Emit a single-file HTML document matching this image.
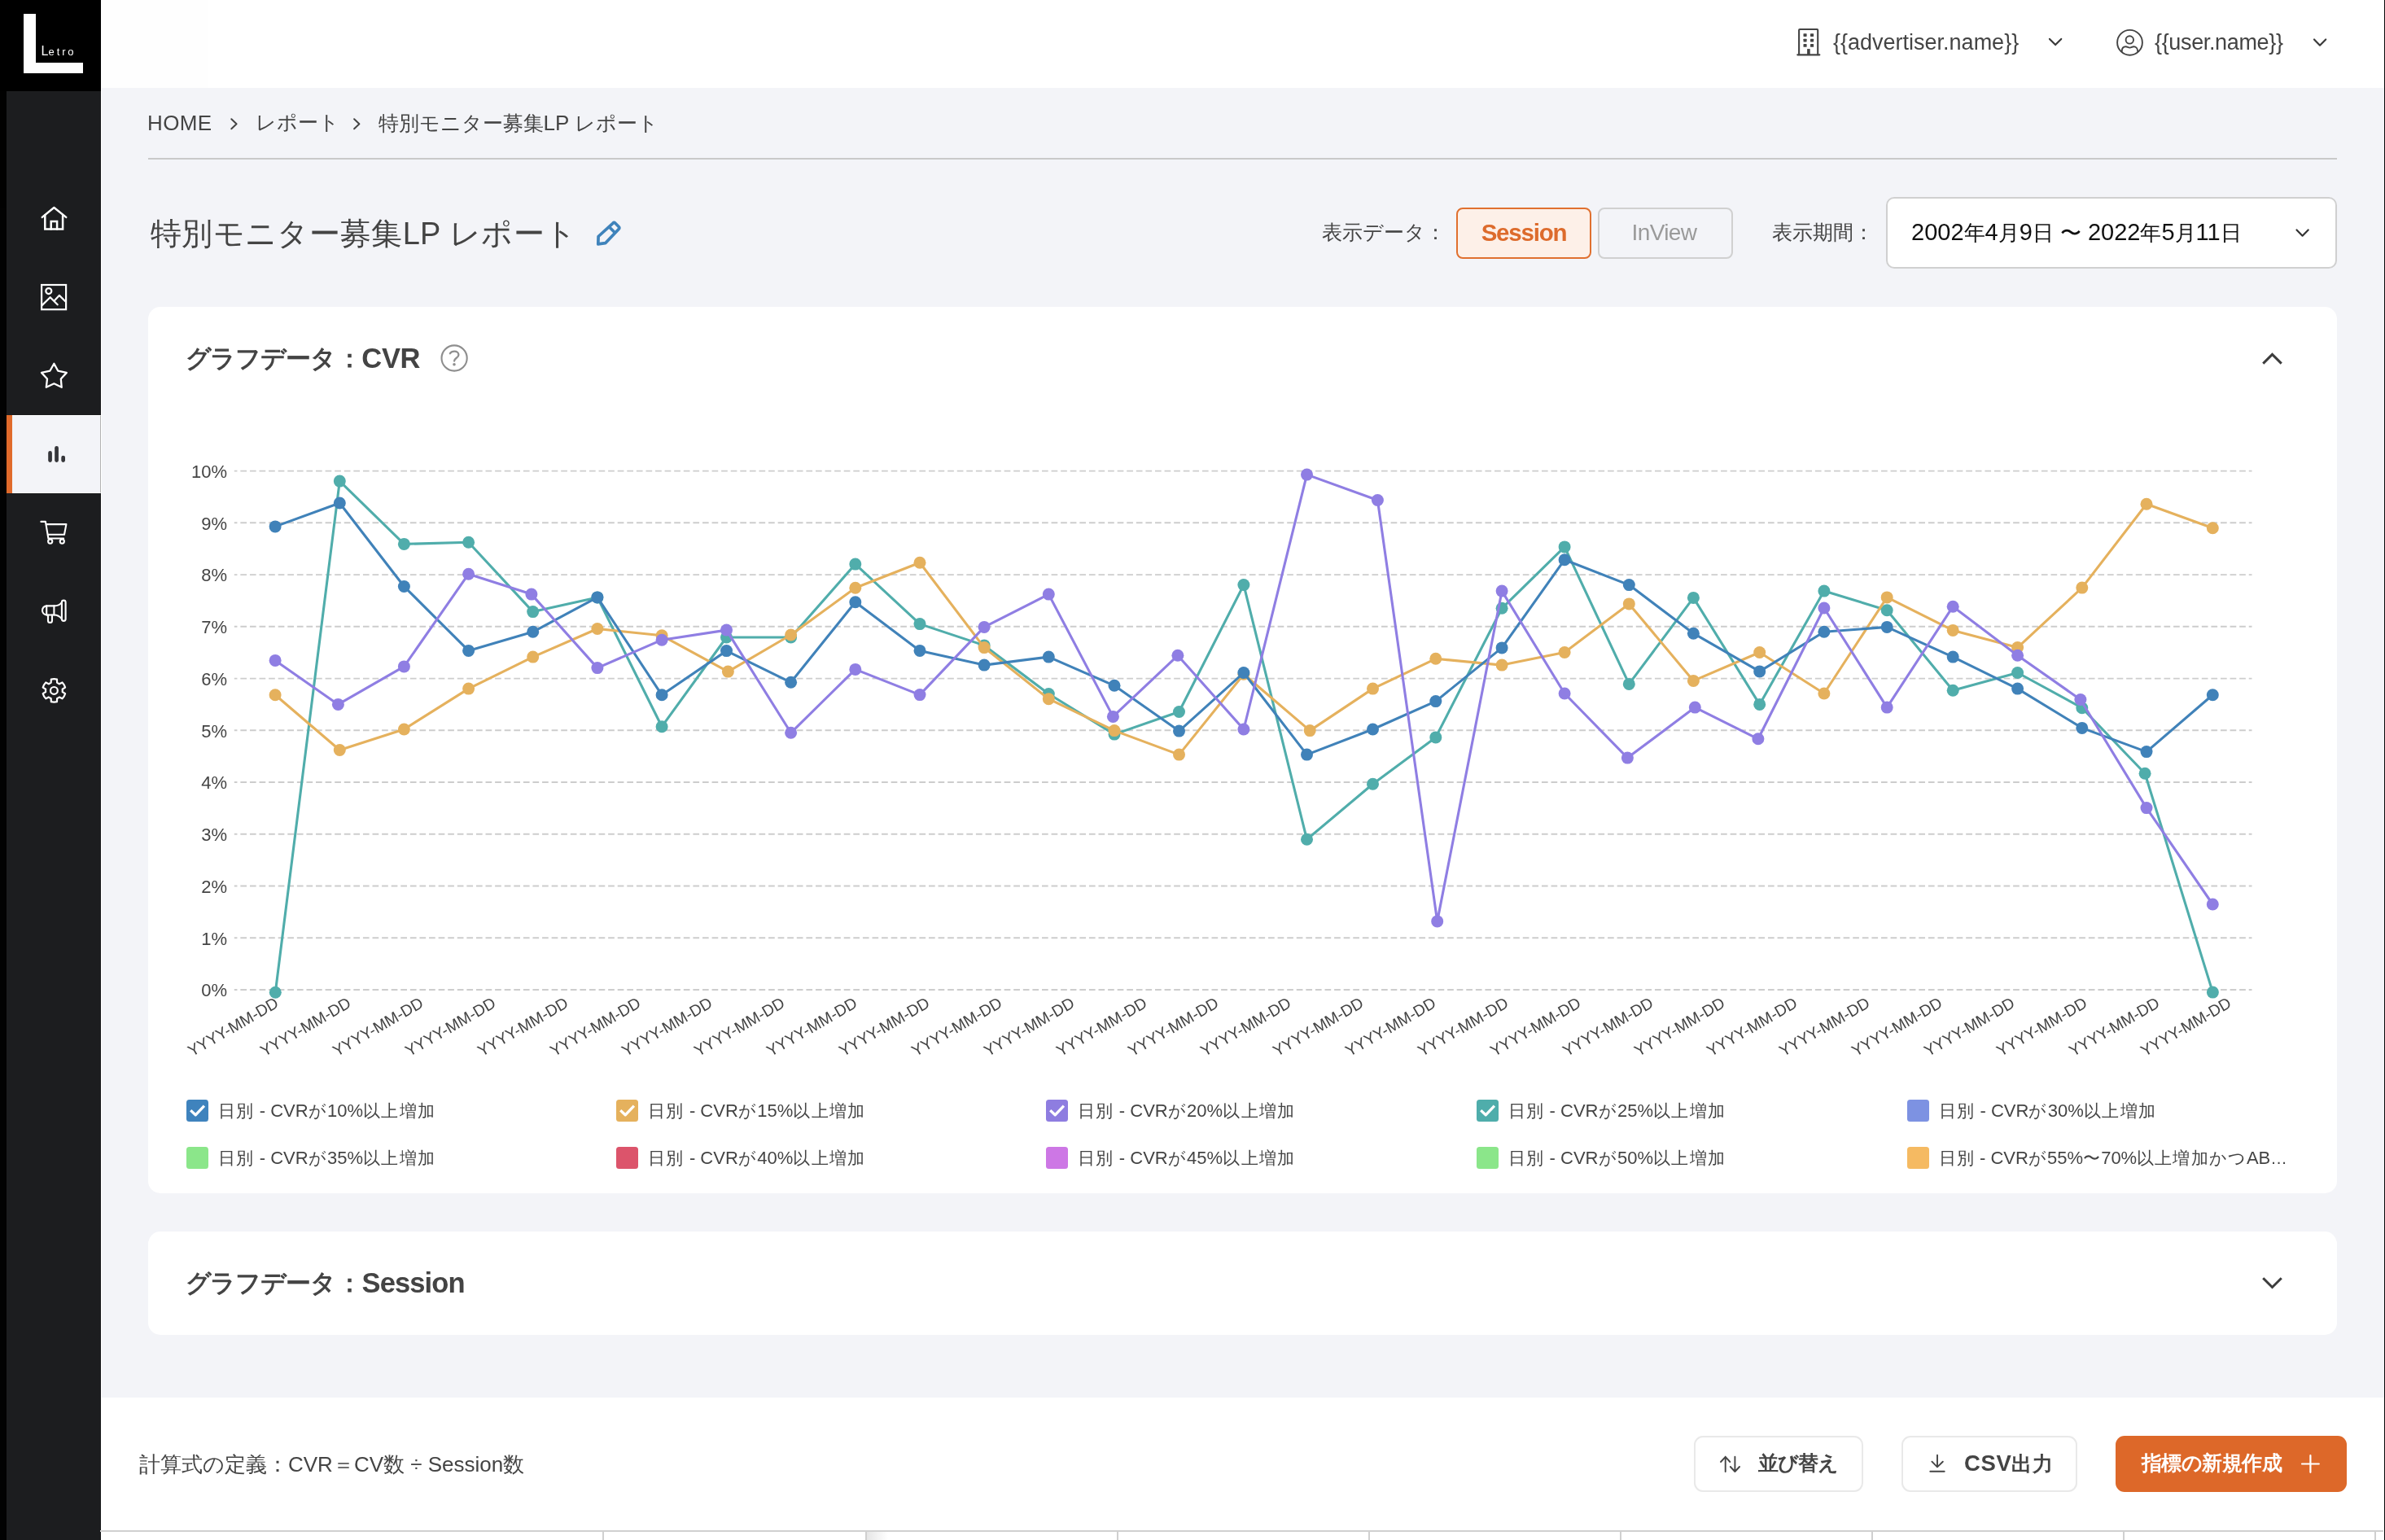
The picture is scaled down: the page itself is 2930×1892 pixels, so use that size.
<!DOCTYPE html>
<html lang="ja">
<head>
<meta charset="utf-8">
<title>Letro Report</title>
<style>
*{box-sizing:border-box;margin:0;padding:0}
html,body{width:2930px;height:1892px;overflow:hidden}
body{position:relative;background:#f3f4f8;font-family:"Liberation Sans",sans-serif;color:#444;font-size:26px}
.abs{position:absolute}
.t{position:absolute;white-space:nowrap;line-height:1}
#strip{left:0;top:0;width:8px;height:1892px;background:rgba(0,0,0,.998)}
#side{left:8px;top:0;width:115.5px;height:1892px;background:rgba(27,28,30,.998)}
#logo{left:0;top:0;width:123.5px;height:111.5px;background:rgba(0,0,0,.998)}
#hdr{left:123px;top:0;width:2807px;height:108px;background:rgba(255,255,255,.998)}
#active{left:8px;top:509.8px;width:116px;height:96.3px;background:#f3f4f8;border-right:1px solid #b2b2b2;border-top:1.3px solid #fff;border-bottom:1.3px solid #fff}
#redge{left:2928.5px;top:0;width:1.5px;height:1892px;background:#0a0a0a}
.card{position:absolute;left:181.6px;width:2689.4px;background:#fff;border-radius:15px}
#bottom{left:123.5px;top:1716.8px;width:2805px;height:176px;background:rgba(255,255,255,.998)}
.btn{position:absolute;top:1764px;height:69px;border:2px solid #e9e9e9;border-radius:11px;background:#fff}
.lg{position:absolute;width:26.8px;height:26.8px;border-radius:3.5px}
.lt{position:absolute;white-space:nowrap;line-height:1;font-size:20.6px;letter-spacing:1.4px;color:#444}
.lt b{font-weight:normal;font-size:22px;letter-spacing:0}
.xl{position:absolute;white-space:nowrap;line-height:1;font-size:19.6px;color:#444;transform-origin:100% 50%;transform:rotate(-30deg)}
.dt b{font-weight:normal;font-size:29px}
.yl{position:absolute;white-space:nowrap;line-height:1;font-size:22px;color:#444;text-align:right;width:80px;left:199px}
</style>
</head>
<body>
<div id="wrap" style="position:absolute;left:0;top:0;width:2930px;height:1892px;will-change:opacity;opacity:0.999">
<div id="hdr" class="abs"></div>
<div class="abs" style="left:124px;top:108px;width:1px;height:1784px;background:#fff"></div>
<div id="strip" class="abs"></div>
<div id="side" class="abs"></div>
<div id="logo" class="abs">
  <svg class="abs" style="left:0;top:0" width="123" height="111" viewBox="0 0 123 111">
    <path d="M29 17h15v60h58v13H29z" fill="#fff"/>
    <text y="68" font-family="Liberation Sans, sans-serif" fill="#fff"><tspan x="50.4" font-size="16">L</tspan><tspan x="59.5" font-size="13" letter-spacing="2.9">etro</tspan></text>
  </svg>
</div>
<div id="active" class="abs"></div>
<div class="abs" style="left:8px;top:509.8px;width:7.2px;height:96.3px;background:#e06a2b"></div>
<div id="redge" class="abs"></div>

<!-- header right -->
<div class="t" style="left:2252px;top:38.5px;font-size:27px">{{advertiser.name}}</div>
<div class="t" style="left:2647px;top:38.5px;font-size:27px;letter-spacing:-0.35px">{{user.name}}</div>

<!-- breadcrumb -->
<div class="t" style="left:181px;top:137.8px;letter-spacing:0.4px">HOME</div>
<div class="t" style="left:313.7px;top:138px;font-size:25px">レポート</div>
<div class="t" style="left:464.5px;top:138px;font-size:25px">特別モニター募集<span style="font-size:26px">LP </span>レポート</div>
<div class="abs" style="left:182px;top:194px;width:2689px;height:2px;background:#c9c9c9"></div>

<!-- title row -->
<div class="t" style="left:185px;top:268px;font-size:38px;letter-spacing:0.33px">特別モニター募集LP レポート</div>
<div class="t" style="left:1624px;top:273px;font-size:25px">表示データ：</div>
<div class="abs" style="left:1789px;top:255px;width:166px;height:63px;border:2px solid #e0702f;border-radius:8px;background:#fdf0e8"></div>
<div class="t" style="left:1789px;top:271px;width:166px;text-align:center;font-size:29.5px;letter-spacing:-1.2px;font-weight:bold;color:#dd6b2c">Session</div>
<div class="abs" style="left:1963px;top:255px;width:166px;height:63px;border:2px solid #d0d0d0;border-radius:8px;background:#f3f4f8"></div>
<div class="t" style="left:1963px;top:272px;width:163px;text-align:center;font-size:28px;letter-spacing:-0.6px;color:#9a9a9a">InView</div>
<div class="t" style="left:2176.5px;top:273px;font-size:25px">表示期間：</div>
<div class="abs" style="left:2317px;top:242px;width:554px;height:88px;border:2px solid #d0d0d0;border-radius:10px;background:#fff"></div>
<div class="t dt" style="left:2348px;top:271px;font-size:26px;color:#111"><b>2002</b>年<b>4</b>月<b>9</b>日<b> </b>〜<b> </b><b>2022</b>年<b>5</b>月<b>11</b>日</div>

<!-- card 1 -->
<div class="card" style="top:376.8px;height:1089.5px"></div>
<div class="t" style="left:227.6px;top:425px;font-size:31px;font-weight:bold;letter-spacing:-1.1px">グラフデータ</div><div class="t" style="left:413.5px;top:425px;font-size:31px;font-weight:bold">：</div><div class="t" style="left:444.3px;top:422.5px;font-size:34.5px;font-weight:bold;letter-spacing:-0.3px">CVR</div>
<svg class="abs" style="left:0;top:0" width="2930" height="1892" viewBox="0 0 2930 1892">
<line x1="287.8" x2="2766.5" y1="578.6" y2="578.6" stroke="#cdcdcd" stroke-width="1.9" stroke-dasharray="7.7 3.884" stroke-dashoffset="4.034"/>
<line x1="287.8" x2="2766.5" y1="642.3" y2="642.3" stroke="#cdcdcd" stroke-width="1.9" stroke-dasharray="7.7 3.884" stroke-dashoffset="4.034"/>
<line x1="287.8" x2="2766.5" y1="706.1" y2="706.1" stroke="#cdcdcd" stroke-width="1.9" stroke-dasharray="7.7 3.884" stroke-dashoffset="4.034"/>
<line x1="287.8" x2="2766.5" y1="769.8" y2="769.8" stroke="#cdcdcd" stroke-width="1.9" stroke-dasharray="7.7 3.884" stroke-dashoffset="4.034"/>
<line x1="287.8" x2="2766.5" y1="833.6" y2="833.6" stroke="#cdcdcd" stroke-width="1.9" stroke-dasharray="7.7 3.884" stroke-dashoffset="4.034"/>
<line x1="287.8" x2="2766.5" y1="897.3" y2="897.3" stroke="#cdcdcd" stroke-width="1.9" stroke-dasharray="7.7 3.884" stroke-dashoffset="4.034"/>
<line x1="287.8" x2="2766.5" y1="961.0" y2="961.0" stroke="#cdcdcd" stroke-width="1.9" stroke-dasharray="7.7 3.884" stroke-dashoffset="4.034"/>
<line x1="287.8" x2="2766.5" y1="1024.8" y2="1024.8" stroke="#cdcdcd" stroke-width="1.9" stroke-dasharray="7.7 3.884" stroke-dashoffset="4.034"/>
<line x1="287.8" x2="2766.5" y1="1088.5" y2="1088.5" stroke="#cdcdcd" stroke-width="1.9" stroke-dasharray="7.7 3.884" stroke-dashoffset="4.034"/>
<line x1="287.8" x2="2766.5" y1="1152.3" y2="1152.3" stroke="#cdcdcd" stroke-width="1.9" stroke-dasharray="7.7 3.884" stroke-dashoffset="4.034"/>
<line x1="287.8" x2="2766.5" y1="1216.0" y2="1216.0" stroke="#cdcdcd" stroke-width="1.9" stroke-dasharray="7.7 3.884" stroke-dashoffset="4.034"/>
<polyline points="338.3,1219.2 417.3,591.1 496.4,668.4 575.6,666.3 654.7,751.6 733.9,733.9 813.1,892.7 892.5,783.0 971.6,783.0 1050.8,693.1 1130.0,766.6 1209.1,792.9 1288.3,852.5 1369.0,902.1 1448.5,874.5 1527.9,718.6 1605.5,1031.3 1686.5,963.3 1763.8,905.9 1845.1,747.3 1922.1,671.9 2001.3,840.4 2080.4,734.4 2161.7,865.4 2240.9,726.1 2318.2,749.7 2399.2,848.2 2478.6,826.5 2557.8,869.7 2635.1,950.2 2718.4,1219.1" fill="none" stroke="#50adab" stroke-width="3.1" stroke-linejoin="round"/>
<g fill="#50adab"><circle cx="338.3" cy="1219.2" r="7.5"/><circle cx="417.3" cy="591.1" r="7.5"/><circle cx="496.4" cy="668.4" r="7.5"/><circle cx="575.6" cy="666.3" r="7.5"/><circle cx="654.7" cy="751.6" r="7.5"/><circle cx="733.9" cy="733.9" r="7.5"/><circle cx="813.1" cy="892.7" r="7.5"/><circle cx="892.5" cy="783.0" r="7.5"/><circle cx="971.6" cy="783.0" r="7.5"/><circle cx="1050.8" cy="693.1" r="7.5"/><circle cx="1130.0" cy="766.6" r="7.5"/><circle cx="1209.1" cy="792.9" r="7.5"/><circle cx="1288.3" cy="852.5" r="7.5"/><circle cx="1369.0" cy="902.1" r="7.5"/><circle cx="1448.5" cy="874.5" r="7.5"/><circle cx="1527.9" cy="718.6" r="7.5"/><circle cx="1605.5" cy="1031.3" r="7.5"/><circle cx="1686.5" cy="963.3" r="7.5"/><circle cx="1763.8" cy="905.9" r="7.5"/><circle cx="1845.1" cy="747.3" r="7.5"/><circle cx="1922.1" cy="671.9" r="7.5"/><circle cx="2001.3" cy="840.4" r="7.5"/><circle cx="2080.4" cy="734.4" r="7.5"/><circle cx="2161.7" cy="865.4" r="7.5"/><circle cx="2240.9" cy="726.1" r="7.5"/><circle cx="2318.2" cy="749.7" r="7.5"/><circle cx="2399.2" cy="848.2" r="7.5"/><circle cx="2478.6" cy="826.5" r="7.5"/><circle cx="2557.8" cy="869.7" r="7.5"/><circle cx="2635.1" cy="950.2" r="7.5"/><circle cx="2718.4" cy="1219.1" r="7.5"/></g>
<polyline points="338.1,853.8 417.3,921.5 496.4,896.0 575.6,846.1 654.7,807.1 733.9,772.5 813.1,780.8 894.4,825.1 971.6,780.0 1050.8,722.3 1130.0,691.2 1209.1,795.6 1288.3,858.7 1369.0,897.6 1448.5,927.1 1527.9,828.3 1609.2,897.6 1686.5,846.1 1763.8,809.3 1845.1,817.1 1922.1,801.5 2001.3,741.9 2080.4,836.4 2161.7,801.5 2240.9,852.0 2318.2,733.9 2399.2,774.4 2478.6,795.6 2557.8,722.1 2637.0,619.3 2718.3,648.8" fill="none" stroke="#e5b15d" stroke-width="3.1" stroke-linejoin="round"/>
<g fill="#e5b15d"><circle cx="338.1" cy="853.8" r="7.5"/><circle cx="417.3" cy="921.5" r="7.5"/><circle cx="496.4" cy="896.0" r="7.5"/><circle cx="575.6" cy="846.1" r="7.5"/><circle cx="654.7" cy="807.1" r="7.5"/><circle cx="733.9" cy="772.5" r="7.5"/><circle cx="813.1" cy="780.8" r="7.5"/><circle cx="894.4" cy="825.1" r="7.5"/><circle cx="971.6" cy="780.0" r="7.5"/><circle cx="1050.8" cy="722.3" r="7.5"/><circle cx="1130.0" cy="691.2" r="7.5"/><circle cx="1209.1" cy="795.6" r="7.5"/><circle cx="1288.3" cy="858.7" r="7.5"/><circle cx="1369.0" cy="897.6" r="7.5"/><circle cx="1448.5" cy="927.1" r="7.5"/><circle cx="1527.9" cy="828.3" r="7.5"/><circle cx="1609.2" cy="897.6" r="7.5"/><circle cx="1686.5" cy="846.1" r="7.5"/><circle cx="1763.8" cy="809.3" r="7.5"/><circle cx="1845.1" cy="817.1" r="7.5"/><circle cx="1922.1" cy="801.5" r="7.5"/><circle cx="2001.3" cy="741.9" r="7.5"/><circle cx="2080.4" cy="836.4" r="7.5"/><circle cx="2161.7" cy="801.5" r="7.5"/><circle cx="2240.9" cy="852.0" r="7.5"/><circle cx="2318.2" cy="733.9" r="7.5"/><circle cx="2399.2" cy="774.4" r="7.5"/><circle cx="2478.6" cy="795.6" r="7.5"/><circle cx="2557.8" cy="722.1" r="7.5"/><circle cx="2637.0" cy="619.3" r="7.5"/><circle cx="2718.3" cy="648.8" r="7.5"/></g>
<polyline points="338.1,646.9 417.3,618.0 496.4,720.5 575.6,799.4 654.7,776.3 733.9,733.9 813.1,853.8 892.5,799.6 971.6,838.3 1050.8,739.8 1130.0,799.4 1209.1,817.1 1288.3,807.1 1369.0,842.3 1448.5,898.1 1527.9,826.5 1605.5,927.1 1686.5,896.0 1763.8,861.6 1845.1,795.9 1922.1,687.7 2001.3,718.6 2080.4,778.2 2161.7,824.9 2240.9,776.3 2318.2,770.4 2399.2,807.1 2478.6,846.1 2557.8,894.4 2637.0,923.6 2718.3,853.8" fill="none" stroke="#4082b9" stroke-width="3.1" stroke-linejoin="round"/>
<g fill="#4082b9"><circle cx="338.1" cy="646.9" r="7.5"/><circle cx="417.3" cy="618.0" r="7.5"/><circle cx="496.4" cy="720.5" r="7.5"/><circle cx="575.6" cy="799.4" r="7.5"/><circle cx="654.7" cy="776.3" r="7.5"/><circle cx="733.9" cy="733.9" r="7.5"/><circle cx="813.1" cy="853.8" r="7.5"/><circle cx="892.5" cy="799.6" r="7.5"/><circle cx="971.6" cy="838.3" r="7.5"/><circle cx="1050.8" cy="739.8" r="7.5"/><circle cx="1130.0" cy="799.4" r="7.5"/><circle cx="1209.1" cy="817.1" r="7.5"/><circle cx="1288.3" cy="807.1" r="7.5"/><circle cx="1369.0" cy="842.3" r="7.5"/><circle cx="1448.5" cy="898.1" r="7.5"/><circle cx="1527.9" cy="826.5" r="7.5"/><circle cx="1605.5" cy="927.1" r="7.5"/><circle cx="1686.5" cy="896.0" r="7.5"/><circle cx="1763.8" cy="861.6" r="7.5"/><circle cx="1845.1" cy="795.9" r="7.5"/><circle cx="1922.1" cy="687.7" r="7.5"/><circle cx="2001.3" cy="718.6" r="7.5"/><circle cx="2080.4" cy="778.2" r="7.5"/><circle cx="2161.7" cy="824.9" r="7.5"/><circle cx="2240.9" cy="776.3" r="7.5"/><circle cx="2318.2" cy="770.4" r="7.5"/><circle cx="2399.2" cy="807.1" r="7.5"/><circle cx="2478.6" cy="846.1" r="7.5"/><circle cx="2557.8" cy="894.4" r="7.5"/><circle cx="2637.0" cy="923.6" r="7.5"/><circle cx="2718.3" cy="853.8" r="7.5"/></g>
<polyline points="338.1,811.4 415.4,865.4 496.4,818.9 575.6,705.2 652.9,730.1 733.9,820.6 813.1,786.2 892.5,774.1 971.6,900.3 1050.8,822.4 1130.0,853.6 1209.1,770.4 1288.3,730.1 1367.4,880.4 1446.9,805.3 1527.9,896.0 1605.5,583.1 1692.4,614.5 1765.7,1131.9 1845.1,726.1 1922.1,852.0 1999.4,931.1 2082.3,869.1 2159.9,907.8 2240.9,747.0 2318.2,869.1 2399.2,745.2 2478.6,805.3 2555.9,859.5 2637.0,992.6 2718.3,1111.0" fill="none" stroke="#8f7ee3" stroke-width="3.1" stroke-linejoin="round"/>
<g fill="#8f7ee3"><circle cx="338.1" cy="811.4" r="7.5"/><circle cx="415.4" cy="865.4" r="7.5"/><circle cx="496.4" cy="818.9" r="7.5"/><circle cx="575.6" cy="705.2" r="7.5"/><circle cx="652.9" cy="730.1" r="7.5"/><circle cx="733.9" cy="820.6" r="7.5"/><circle cx="813.1" cy="786.2" r="7.5"/><circle cx="892.5" cy="774.1" r="7.5"/><circle cx="971.6" cy="900.3" r="7.5"/><circle cx="1050.8" cy="822.4" r="7.5"/><circle cx="1130.0" cy="853.6" r="7.5"/><circle cx="1209.1" cy="770.4" r="7.5"/><circle cx="1288.3" cy="730.1" r="7.5"/><circle cx="1367.4" cy="880.4" r="7.5"/><circle cx="1446.9" cy="805.3" r="7.5"/><circle cx="1527.9" cy="896.0" r="7.5"/><circle cx="1605.5" cy="583.1" r="7.5"/><circle cx="1692.4" cy="614.5" r="7.5"/><circle cx="1765.7" cy="1131.9" r="7.5"/><circle cx="1845.1" cy="726.1" r="7.5"/><circle cx="1922.1" cy="852.0" r="7.5"/><circle cx="1999.4" cy="931.1" r="7.5"/><circle cx="2082.3" cy="869.1" r="7.5"/><circle cx="2159.9" cy="907.8" r="7.5"/><circle cx="2240.9" cy="747.0" r="7.5"/><circle cx="2318.2" cy="869.1" r="7.5"/><circle cx="2399.2" cy="745.2" r="7.5"/><circle cx="2478.6" cy="805.3" r="7.5"/><circle cx="2555.9" cy="859.5" r="7.5"/><circle cx="2637.0" cy="992.6" r="7.5"/><circle cx="2718.3" cy="1111.0" r="7.5"/></g>

</svg>
<div class="yl" style="top:568.9px">10%</div>
<div class="yl" style="top:632.6px">9%</div>
<div class="yl" style="top:696.4px">8%</div>
<div class="yl" style="top:760.1px">7%</div>
<div class="yl" style="top:823.9px">6%</div>
<div class="yl" style="top:887.6px">5%</div>
<div class="yl" style="top:951.3px">4%</div>
<div class="yl" style="top:1015.1px">3%</div>
<div class="yl" style="top:1078.8px">2%</div>
<div class="yl" style="top:1142.6px">1%</div>
<div class="yl" style="top:1206.3px">0%</div>
<div class="xl" style="right:2589.3px;top:1221px">YYYY-MM-DD</div>
<div class="xl" style="right:2500.4px;top:1221px">YYYY-MM-DD</div>
<div class="xl" style="right:2411.6px;top:1221px">YYYY-MM-DD</div>
<div class="xl" style="right:2322.7px;top:1221px">YYYY-MM-DD</div>
<div class="xl" style="right:2233.9px;top:1221px">YYYY-MM-DD</div>
<div class="xl" style="right:2145.0px;top:1221px">YYYY-MM-DD</div>
<div class="xl" style="right:2056.1px;top:1221px">YYYY-MM-DD</div>
<div class="xl" style="right:1967.3px;top:1221px">YYYY-MM-DD</div>
<div class="xl" style="right:1878.4px;top:1221px">YYYY-MM-DD</div>
<div class="xl" style="right:1789.6px;top:1221px">YYYY-MM-DD</div>
<div class="xl" style="right:1700.7px;top:1221px">YYYY-MM-DD</div>
<div class="xl" style="right:1611.8px;top:1221px">YYYY-MM-DD</div>
<div class="xl" style="right:1523.0px;top:1221px">YYYY-MM-DD</div>
<div class="xl" style="right:1434.1px;top:1221px">YYYY-MM-DD</div>
<div class="xl" style="right:1345.3px;top:1221px">YYYY-MM-DD</div>
<div class="xl" style="right:1256.4px;top:1221px">YYYY-MM-DD</div>
<div class="xl" style="right:1167.5px;top:1221px">YYYY-MM-DD</div>
<div class="xl" style="right:1078.7px;top:1221px">YYYY-MM-DD</div>
<div class="xl" style="right:989.8px;top:1221px">YYYY-MM-DD</div>
<div class="xl" style="right:901.0px;top:1221px">YYYY-MM-DD</div>
<div class="xl" style="right:812.1px;top:1221px">YYYY-MM-DD</div>
<div class="xl" style="right:723.2px;top:1221px">YYYY-MM-DD</div>
<div class="xl" style="right:634.4px;top:1221px">YYYY-MM-DD</div>
<div class="xl" style="right:545.5px;top:1221px">YYYY-MM-DD</div>
<div class="xl" style="right:456.7px;top:1221px">YYYY-MM-DD</div>
<div class="xl" style="right:367.8px;top:1221px">YYYY-MM-DD</div>
<div class="xl" style="right:278.9px;top:1221px">YYYY-MM-DD</div>
<div class="xl" style="right:190.1px;top:1221px">YYYY-MM-DD</div>
<div class="lg" style="left:229.0px;top:1350.9px;background:#3f83bd"></div>
<svg class="abs" style="left:229.0px;top:1350.9px" width="27" height="27" viewBox="0 0 27 27"><path d="M5.2 13.1L11.2 18.8L21.9 7.6" fill="none" stroke="#fff" stroke-width="3.3" stroke-linecap="butt" stroke-linejoin="round"/></svg>
<div class="lt" style="left:267.8px;top:1353.9px">日別<b> - CVR</b>が<b>10%</b>以上増加</div>
<div class="lg" style="left:757.2px;top:1350.9px;background:#e5b15d"></div>
<svg class="abs" style="left:757.2px;top:1350.9px" width="27" height="27" viewBox="0 0 27 27"><path d="M5.2 13.1L11.2 18.8L21.9 7.6" fill="none" stroke="#fff" stroke-width="3.3" stroke-linecap="butt" stroke-linejoin="round"/></svg>
<div class="lt" style="left:796.0px;top:1353.9px">日別<b> - CVR</b>が<b>15%</b>以上増加</div>
<div class="lg" style="left:1285.1px;top:1350.9px;background:#8e7de0"></div>
<svg class="abs" style="left:1285.1px;top:1350.9px" width="27" height="27" viewBox="0 0 27 27"><path d="M5.2 13.1L11.2 18.8L21.9 7.6" fill="none" stroke="#fff" stroke-width="3.3" stroke-linecap="butt" stroke-linejoin="round"/></svg>
<div class="lt" style="left:1323.9px;top:1353.9px">日別<b> - CVR</b>が<b>20%</b>以上増加</div>
<div class="lg" style="left:1813.9px;top:1350.9px;background:#4fadab"></div>
<svg class="abs" style="left:1813.9px;top:1350.9px" width="27" height="27" viewBox="0 0 27 27"><path d="M5.2 13.1L11.2 18.8L21.9 7.6" fill="none" stroke="#fff" stroke-width="3.3" stroke-linecap="butt" stroke-linejoin="round"/></svg>
<div class="lt" style="left:1852.7px;top:1353.9px">日別<b> - CVR</b>が<b>25%</b>以上増加</div>
<div class="lg" style="left:2342.8px;top:1350.9px;background:#7d92e2"></div>
<div class="lt" style="left:2381.6px;top:1353.9px">日別<b> - CVR</b>が<b>30%</b>以上増加</div>
<div class="lg" style="left:229.0px;top:1409.0px;background:#8be68a"></div>
<div class="lt" style="left:267.8px;top:1412.0px">日別<b> - CVR</b>が<b>35%</b>以上増加</div>
<div class="lg" style="left:757.2px;top:1409.0px;background:#dc546b"></div>
<div class="lt" style="left:796.0px;top:1412.0px">日別<b> - CVR</b>が<b>40%</b>以上増加</div>
<div class="lg" style="left:1285.1px;top:1409.0px;background:#cd77e5"></div>
<div class="lt" style="left:1323.9px;top:1412.0px">日別<b> - CVR</b>が<b>45%</b>以上増加</div>
<div class="lg" style="left:1813.9px;top:1409.0px;background:#8be68a"></div>
<div class="lt" style="left:1852.7px;top:1412.0px">日別<b> - CVR</b>が<b>50%</b>以上増加</div>
<div class="lg" style="left:2342.8px;top:1409.0px;background:#f5ba62"></div>
<div class="lt" style="left:2381.6px;top:1412.0px;letter-spacing:1.12px">日別<b> - CVR</b>が<b>55%</b>〜<b>70%</b>以上増加かつ<b>AB</b>…</div>

<!-- card 2 -->
<div class="card" style="top:1512.7px;height:127.6px"></div>
<div class="t" style="left:227.6px;top:1561px;font-size:31px;font-weight:bold;letter-spacing:-1.1px">グラフデータ</div><div class="t" style="left:413.5px;top:1561px;font-size:31px;font-weight:bold">：</div><div class="t" style="left:444.6px;top:1558.5px;font-size:34.5px;letter-spacing:-0.9px;font-weight:bold">Session</div>

<!-- bottom -->
<div id="bottom" class="abs"></div>
<div class="t" style="left:171px;top:1786px;font-size:26px">計算式の定義：CVR＝CV数 ÷ Session数</div>
<div class="btn" style="left:2081px;width:208px"></div>
<div class="t" style="left:2159.5px;top:1786px;font-size:24.5px;letter-spacing:-1px;font-weight:bold">並び替え</div>
<div class="btn" style="left:2336px;width:216px"></div>
<div class="t" style="left:2413px;top:1784px;font-size:27.5px;letter-spacing:0.6px;font-weight:bold">CSV<span style="font-size:25px">出力</span></div>
<div class="btn" style="left:2599px;width:284px;border:none;background:#dd6829"></div>
<div class="t" style="left:2630.5px;top:1786px;font-size:24.6px;letter-spacing:-0.45px;font-weight:bold;color:#fff">指標の新規作成</div>
<!-- table top -->
<div class="abs" style="left:123px;top:1880px;width:2805px;height:2px;background:#d0d0d0"></div>
<div class="abs" style="left:740px;top:1880px;width:2px;height:12px;background:#d0d0d0"></div>
<div class="abs" style="left:1063px;top:1880px;width:2px;height:12px;background:#d0d0d0"></div>
<div class="abs" style="left:1372px;top:1880px;width:2px;height:12px;background:#d0d0d0"></div>
<div class="abs" style="left:1681px;top:1880px;width:2px;height:12px;background:#d0d0d0"></div>
<div class="abs" style="left:1990px;top:1880px;width:2px;height:12px;background:#d0d0d0"></div>
<div class="abs" style="left:2299px;top:1880px;width:2px;height:12px;background:#d0d0d0"></div>
<div class="abs" style="left:2608px;top:1880px;width:2px;height:12px;background:#d0d0d0"></div>
<div class="abs" style="left:2917px;top:1880px;width:2px;height:12px;background:#d0d0d0"></div>
<div class="abs" style="left:1065px;top:1882px;width:26px;height:10px;background:linear-gradient(90deg,#e6e6e6,#fff)"></div>
<svg class="abs" style="left:0;top:0" width="2930" height="1892" viewBox="0 0 2930 1892" fill="none" stroke-linecap="round" stroke-linejoin="round">
<g stroke="#fff" stroke-width="2.5"><path d="M51.8 266.9L66.4 255L81.2 266.9"/><path d="M55.3 264.6V281.5H77.1V264.6" stroke-linejoin="miter"/><path d="M62.7 281.5V272.1H70.1V281.5" stroke-linejoin="miter"/></g>
<g stroke="#fff" stroke-width="2.2"><rect x="51.1" y="350" width="30" height="30.2" stroke-linejoin="miter"/><circle cx="59.8" cy="357.6" r="3.5"/><path d="M51.6 375.1L61.7 365.2L70.7 374.3"/><path d="M67.2 368.9L72.8 362.9L80.8 370.8"/></g>
<path stroke="#fff" stroke-width="2.3" d="M66.4 446.8L71.3 455.7L81.8 457.9L74.8 465.5L75.7 475.8L66.4 471.3L56.8 475.8L58.0 465.5L51.0 457.9L61.3 455.7Z"/>
<g fill="#35363a"><rect x="59.2" y="554.1" width="4.7" height="13.8" rx="2.35"/><rect x="67.2" y="547.9" width="4.7" height="20" rx="2.35"/><rect x="75.3" y="559.7" width="4.7" height="8.2" rx="2.35"/></g>
<g stroke="#fff" stroke-width="2.1"><path d="M50.4 640.9H55.9L59.4 661.5H78.1"/><path d="M57 644.1H81.4L79 656.7H59"/><circle cx="61.7" cy="665.1" r="2.6"/><circle cx="76.3" cy="665.1" r="2.6"/></g>
<g stroke="#fff" stroke-width="2.1"><rect x="75.9" y="737.6" width="4.7" height="25.3" rx="2.35"/><path d="M75.9 740C73 744 69.5 744.4 66.4 744.4H57.2V755.5H66.4C69.5 755.5 73 756.5 75.9 760.5"/><path d="M66.4 744.4V755.5"/><path d="M57.2 744.4C54 745 52 747.5 52 750C52 752.5 54 755 57.2 755.5"/><path d="M59 755.5V762.5a2.5 2.5 0 0 0 5 0V755.5"/></g>
<g stroke="#fff" stroke-width="2.2"><path d="M70.13 838.69L69.96 834.65A14.2 14.2 0 0 0 62.84 834.65L62.67 838.69A10.4 10.4 0 0 0 59.86 840.32L56.27 838.45A14.2 14.2 0 0 0 52.72 844.61L56.13 846.77A10.4 10.4 0 0 0 56.13 850.03L52.72 852.19A14.2 14.2 0 0 0 56.27 858.35L59.86 856.48A10.4 10.4 0 0 0 62.67 858.11L62.84 862.15A14.2 14.2 0 0 0 69.96 862.15L70.13 858.11A10.4 10.4 0 0 0 72.94 856.48L76.53 858.35A14.2 14.2 0 0 0 80.08 852.19L76.67 850.03A10.4 10.4 0 0 0 76.67 846.77L80.08 844.61A14.2 14.2 0 0 0 76.53 838.45L72.94 840.32A10.4 10.4 0 0 0 70.13 838.69Z"/><circle cx="66.4" cy="848.4" r="4.4"/></g>
<g stroke="#444" stroke-width="2.1"><path d="M2210.1 67.3V37a1 1 0 0 1 1-1H2232.2a1 1 0 0 1 1 1V67.3" stroke-linecap="butt"/><path d="M2208.3 67.3H2235.3" stroke-width="2.2"/></g>
<g fill="#444"><rect x="2215.5" y="41.2" width="4.1" height="3.7" rx="0.6"/><rect x="2215.5" y="47.7" width="4.1" height="3.7" rx="0.6"/><rect x="2215.5" y="54.1" width="4.1" height="3.7" rx="0.6"/><rect x="2224.0" y="41.2" width="4.1" height="3.7" rx="0.6"/><rect x="2224.0" y="47.7" width="4.1" height="3.7" rx="0.6"/><rect x="2224.0" y="54.1" width="4.1" height="3.7" rx="0.6"/><rect x="2220.1" y="60.1" width="3.6" height="7.2"/></g>
<g stroke="#3a3a3a" stroke-width="2.2"><path d="M2518 47.9L2525.1 55.1L2532.2 47.9"/><path d="M2843 48.5L2850 55.7L2857.2 48.5"/></g>
<g stroke="#444" stroke-width="1.9"><circle cx="2616.5" cy="52.3" r="15.4"/><circle cx="2616.3" cy="48.9" r="4.7"/><path d="M2606.7 63.3C2606.7 59.5 2608.8 57.3 2611.5 57.3C2613.5 57.3 2614.3 58.6 2616.4 58.6C2618.5 58.6 2619.3 57.3 2621.3 57.3C2624 57.3 2626.2 59.5 2626.2 63.3"/></g>
<g stroke="#444" stroke-width="2"><path d="M284.3 146.2L290.6 152.2L284.3 158.2"/><path d="M435.1 146.2L441.4 152.2L435.1 158.2"/></g>
<g stroke="#3f83bb" stroke-width="3.7"><path d="M752.9 274.3Q754.4 272.8 755.9 274.3L760.1 278.5Q761.6 280 760.1 281.5L743.7 298.7L734.8 299.9L735.1 290.5Z"/><path d="M748.8 279.2L754.6 285"/></g>
<g stroke="#8e8e8e" stroke-width="2.1"><circle cx="558.1" cy="440" r="15.6"/><path d="M552.9 434.2C554 432.5 556 431.6 558.2 431.6C561.3 431.6 563.4 433.4 563.4 435.9C563.4 439.8 558.2 439.6 558.1 443.5" stroke-width="2.3"/></g><circle cx="558" cy="447.8" r="1.8" fill="#8e8e8e"/>
<g stroke="#3c3c3c" stroke-width="3"><path d="M2781.3 445.6L2791.5 435.4L2801.7 445.6" stroke-linecap="square" stroke-linejoin="miter"/></g>
<g stroke="#3c3c3c" stroke-width="3"><path d="M2781.3 1571.3L2791.5 1581.5L2801.7 1571.3" stroke-linecap="square" stroke-linejoin="miter"/></g>
<g stroke="#333" stroke-width="2.2"><path d="M2821.5 282.5L2828.6 289.7L2835.7 282.5"/></g>
<g stroke="#444" stroke-width="1.9"><path d="M2119.7 1808V1789.8M2114 1796L2119.7 1789.8L2125.3 1796"/><path d="M2131.4 1789.8V1808M2125.8 1802L2131.4 1808L2137 1802"/></g>
<g stroke="#444" stroke-width="1.9"><path d="M2380 1787.7V1802.2M2373.4 1795.7L2380 1802.4L2386.8 1795.7"/><path d="M2371.3 1807.7H2388.7"/></g>
<g stroke="#fff" stroke-width="2.2"><path d="M2838.4 1788.2V1808.8M2828 1798.5H2848.8"/></g>
</svg>
</div>
</body>
</html>
